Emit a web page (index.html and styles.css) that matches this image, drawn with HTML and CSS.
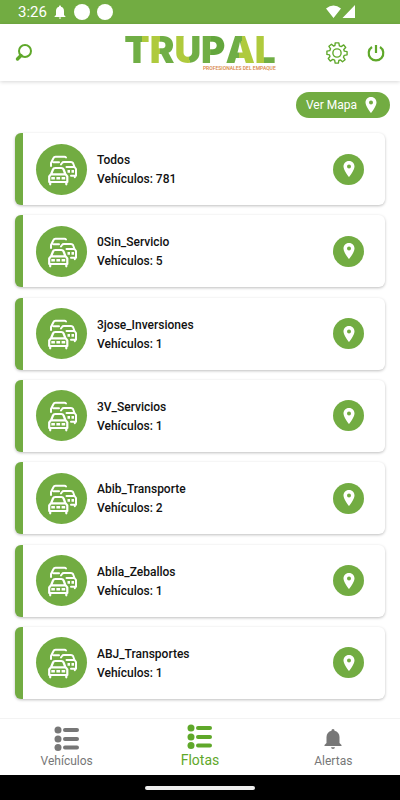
FILE: index.html
```html
<!DOCTYPE html>
<html lang="es">
<head>
<meta charset="utf-8">
<meta name="viewport" content="width=device-width, initial-scale=1">
<title>Flotas</title>
<link rel="stylesheet" href="styles.css">
</head>
<body>
<svg class="defs" aria-hidden="true">
  <symbol id="cars" viewBox="0 0 51 51">
    <g fill="none" stroke="#fff" stroke-width="2" stroke-linejoin="round" stroke-linecap="round">
      <path d="M15 22V19L17.500 14Q18 12.800 19.500 12.800H28.500Q29.500 12.800 30 13.500M17.500 18.200H23"/>
      <path d="M25 20.500L26 19Q26.600 18 28 18H35Q36.500 18 37 19L38.500 23L40 25V31.800H35M30.500 23H38.500M38.800 32V33.200"/>
      <path stroke-width="2.200" d="M15.200 30L17 25.500Q17.600 24 19.200 24H25.300Q27 24 27.600 25.500L29.300 30M14.800 30.300H29.700L31.300 32.500V38H13.200V32.500ZM14.200 38V40.300M30.300 38V40.300"/>
    </g>
    <path d="M15.300 33h3.600v2.600h-3.600zM20.400 33h3.700v2.600h-3.700zM25.600 33h3.600v2.600h-3.600zM31.500 26h2.500v2.800h-2.500zM35.500 26h2.500v2.800h-2.500z" fill="#fff"/>
  </symbol>
  <symbol id="pin" viewBox="0 0 12 16">
    <path fill="#fff" fill-rule="evenodd" d="M6 0C2.500 0 .5 2.500.5 5.500C.5 9.500 6 16 6 16S11.500 9.500 11.500 5.500C11.500 2.500 9.500 0 6 0ZM6 3.500A2 2 0 1 1 6 7.500A2 2 0 1 1 6 3.500Z"/>
  </symbol>
  <symbol id="list" viewBox="0 0 26 26">
    <g fill="currentColor"><circle cx="4" cy="4" r="3.500"/><circle cx="4" cy="13" r="3.500"/><circle cx="4" cy="21.500" r="3.500"/>
    <rect x="9" y="2" width="16" height="4" rx="2"/><rect x="9" y="11" width="16" height="4" rx="2"/><rect x="9" y="19.500" width="16" height="4" rx="2"/></g>
  </symbol>
</svg>
<div class="status">
  <span class="time">3:26</span>
  <svg class="status-bell" viewBox="0 0 12 14"><path fill="#fff" d="M6 0.500C6.800.5 7 1 7 1.800C9 2.300 10 4 10 6V10L11.500 11.500V12H.5V11.500L2 10V6C2 4 3 2.300 5 1.800C5 1 5.200.5 6 .5ZM4.800 12.500H7.200Q7 13.800 6 13.800T4.800 12.500Z"/></svg>
  <i class="dot"></i><i class="dot"></i>
  <svg class="signal" viewBox="0 0 30 14"><path fill="#fff" d="M0 3.500Q7.500-2.500 15 3.500L7.500 13ZM29 0V13H16.500Z"/></svg>
</div>
<header class="header">
  <button class="icon-button" aria-label="Buscar"><svg width="18" height="18" viewBox="0 0 18 18" fill="none" stroke="#5fa82a"><circle cx="10" cy="7" r="6" stroke-width="2"/><path d="M6 11.500L2.500 15" stroke-width="3.400" stroke-linecap="round"/></svg></button>
  <div class="brand">
    <span class="wordmark"><b class="t">T</b><b class="r">R</b><b class="u">U</b><b class="p">P</b><b class="a">A</b><b class="l">L</b></span>
    <span class="tagline">PROFESIONALES DEL EMPAQUE</span>
  </div>
  <div class="actions">
    <button class="icon-button" aria-label="Configuración"><svg width="22" height="22" viewBox="0 0 24 24" fill="none" stroke="#5fa82a" stroke-width="1.500" stroke-linejoin="round"><circle cx="12" cy="12" r="4.500"/><path d="M10 1H14L14.600 4.200L16.600 5L19.300 3.200L21.500 6L19.400 8.200L20 10L23 10.500V14L19.900 14.600L19 16.600L20.800 19.300L18 21.500L15.800 19.600L14 20.200L13.500 23H10L9.400 19.900L7.400 19L4.700 20.800L2.500 18L4.300 15.800L3.800 14L1 13.500V10L4.100 9.400L5 7.400L3.200 4.700L6 2.500L8.200 4.400L9.800 3.800Z"/></svg></button>
    <button class="icon-button" aria-label="Salir"><svg width="18" height="18" viewBox="0 0 18 18" fill="none" stroke="#5fa82a" stroke-width="2.200"><path d="M5 3A7.300 7.300 0 1 0 13 3M9 1V9"/></svg></button>
  </div>
</header>
<main class="main">
  <button class="map-button">Ver Mapa <svg viewBox="0 0 12 16"><use href="#pin"/></svg></button>
  <ul class="fleets">
    <li class="card"><span class="avatar"><svg><use href="#cars"/></svg></span><div class="info"><span>Todos</span><span>Vehículos: 781</span></div><button class="pin" aria-label="Ver Todos"><svg><use href="#pin"/></svg></button></li>
    <li class="card"><span class="avatar"><svg><use href="#cars"/></svg></span><div class="info"><span>0Sin_Servicio</span><span>Vehículos: 5</span></div><button class="pin" aria-label="Ver 0Sin_Servicio"><svg><use href="#pin"/></svg></button></li>
    <li class="card"><span class="avatar"><svg><use href="#cars"/></svg></span><div class="info"><span>3jose_Inversiones</span><span>Vehículos: 1</span></div><button class="pin" aria-label="Ver 3jose_Inversiones"><svg><use href="#pin"/></svg></button></li>
    <li class="card"><span class="avatar"><svg><use href="#cars"/></svg></span><div class="info"><span>3V_Servicios</span><span>Vehículos: 1</span></div><button class="pin" aria-label="Ver 3V_Servicios"><svg><use href="#pin"/></svg></button></li>
    <li class="card"><span class="avatar"><svg><use href="#cars"/></svg></span><div class="info"><span>Abib_Transporte</span><span>Vehículos: 2</span></div><button class="pin" aria-label="Ver Abib_Transporte"><svg><use href="#pin"/></svg></button></li>
    <li class="card"><span class="avatar"><svg><use href="#cars"/></svg></span><div class="info"><span>Abila_Zeballos</span><span>Vehículos: 1</span></div><button class="pin" aria-label="Ver Abila_Zeballos"><svg><use href="#pin"/></svg></button></li>
    <li class="card"><span class="avatar"><svg><use href="#cars"/></svg></span><div class="info"><span>ABJ_Transportes</span><span>Vehículos: 1</span></div><button class="pin" aria-label="Ver ABJ_Transportes"><svg><use href="#pin"/></svg></button></li>
  </ul>
</main>
<nav class="tabs">
  <a href="#vehiculos" class="tab"><svg class="tab-icon"><use href="#list"/></svg>Vehículos</a>
  <a href="#flotas" class="tab active" aria-current="page"><svg class="tab-icon"><use href="#list"/></svg>Flotas</a>
  <a href="#alertas" class="tab"><svg class="tab-icon" viewBox="0 0 26 26"><path fill="currentColor" d="M13 3C14 3 14.500 3.700 14.500 4.800C17.500 5.500 19.500 8 19.500 11V17L21.500 19V20H4.500V19L6.500 17V11C6.500 8 8.500 5.500 11.500 4.800C11.500 3.700 12 3 13 3ZM11 21.200H15Q14.800 23 13 23T11 21.200Z"/></svg>Alertas</a>
</nav>
<div class="system"><span class="handle"></span></div>
</body>
</html>
```
FILE: styles.css
```css
* { box-sizing: border-box; }
html, body { margin: 0; }
body {
  min-height: 100vh;
  display: flex;
  flex-direction: column;
  background: #fff;
  color: #111;
  font-family: Roboto, "Liberation Sans", sans-serif;
}
button { border: 0; padding: 0; font: inherit; background: none; cursor: pointer; }
svg { display: block; }
.defs { position: absolute; width: 0; height: 0; }

.status {
  height: 24px;
  display: flex;
  align-items: center;
  padding: 0 44px 0 18px;
  background: #72ac42;
  color: #fff;
}
.time { font-size: 15px; line-height: 24px; margin-right: 7px; }
.status-bell { width: 12px; height: 14px; margin-right: 8px; }
.dot { width: 16px; height: 16px; border-radius: 50%; background: #fff; margin-right: 7px; }
.signal { width: 30px; height: 14px; margin-left: auto; }

.header {
  height: 57px;
  display: grid;
  grid-template-columns: 1fr auto 1fr;
  align-items: center;
  padding: 0 15px;
  box-shadow: 0 1px 4px rgba(0, 0, 0, .16);
}
.icon-button { display: flex; justify-content: center; }
.header > .icon-button { justify-self: start; }
.actions { display: flex; justify-self: end; align-items: center; gap: 19px; }
.brand { display: flex; flex-direction: column; padding-top: 2px; }
.wordmark { display: flex; font: 900 37px/29px Inter, sans-serif; }
.wordmark b { font-weight: 900; color: transparent; background-clip: text; -webkit-background-clip: text; }
.t { background-image: linear-gradient(90deg, #70ae45 68%, #afca3d 68%); }
.r { background-image: linear-gradient(90deg, #afca3d 42%, #70ae45 42%); }
.u { background-image: linear-gradient(75deg, #afca3d 48%, #70ae45 48%); }
.p { background-image: linear-gradient(90deg, #70ae45 40%, #63a63d 40%); }
.a { background-image: linear-gradient(100deg, #70ae45 50%, #afca3d 50%); }
.l { background-image: linear-gradient(90deg, #afca3d 45%, #70ae45 45%); }
.tagline { align-self: flex-end; color: #d88442; font: 500 5px/8px Roboto, sans-serif; }

.main { flex: 1; display: flex; flex-direction: column; padding: 11px 15px 19px; }
.map-button {
  align-self: flex-end;
  display: flex;
  align-items: center;
  gap: 8px;
  height: 26px;
  margin-right: -5px;
  padding: 0 13px 0 10px;
  border-radius: 13px;
  background: #72ac42;
  color: #fff;
  font-size: 12px;
}
.map-button svg { width: 12px; height: 16px; }
.fleets {
  flex: 1;
  display: flex;
  flex-direction: column;
  justify-content: space-between;
  gap: 10px;
  list-style: none;
  margin: 15px 0 0;
  padding: 0;
}
.card {
  height: 72px;
  display: flex;
  align-items: center;
  gap: 10px;
  padding: 0 21px 0 13px;
  border-left: 8px solid #72ac42;
  border-radius: 6px;
  background: #fff;
  box-shadow: 0 1px 3px rgba(0, 0, 0, .26);
}
.avatar { width: 51px; height: 51px; border-radius: 50%; background: #72ac42; }
.avatar svg { width: 51px; height: 51px; }
.info { flex: 1; display: flex; flex-direction: column; padding-top: 2px; font-size: 12px; line-height: 19px; font-weight: 500; }
.pin {
  width: 31px;
  height: 31px;
  display: grid;
  place-items: center;
  border-radius: 50%;
  background: #72ac42;
}
.pin svg { width: 12px; height: 16px; }

.tabs {
  height: 57px;
  display: grid;
  grid-template-columns: repeat(3, 1fr);
  border-top: 1px solid #f3f3f3;
}
.tab {
  display: flex;
  flex-direction: column;
  align-items: center;
  padding-top: 7px;
  color: #777;
  font-size: 12px;
  line-height: 18px;
  text-decoration: none;
}
.tab-icon { width: 26px; height: 26px; }
.active { padding-top: 5px; color: #5fa82a; font-size: 14px; line-height: 20px; }
.system { height: 25px; display: grid; place-items: center; background: #000; }
.handle { width: 110px; height: 4px; border-radius: 2px; background: #eee; }
```
